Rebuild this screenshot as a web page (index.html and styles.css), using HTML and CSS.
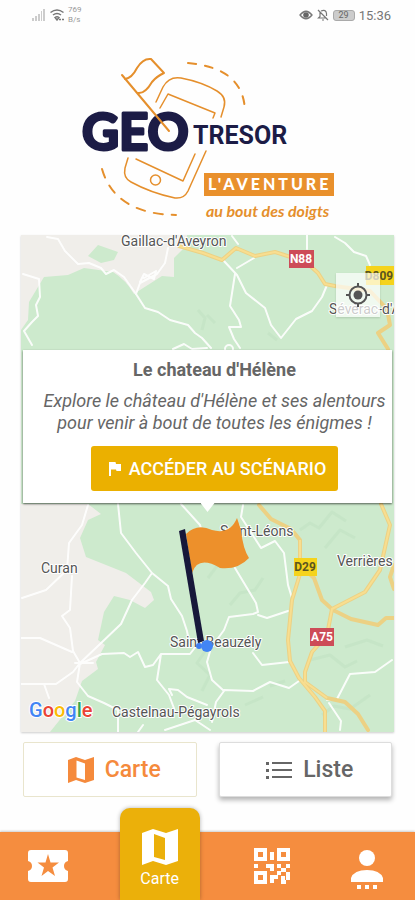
FILE: index.html
```html
<!DOCTYPE html>
<html lang="fr">
<head>
<meta charset="utf-8">
<meta name="viewport" content="width=device-width, initial-scale=1">
<title>Geotresor</title>
<link rel="stylesheet" href="styles.css">
</head>
<body>
<div class="status">
  <div class="status-group">
    <svg width="14" height="12" viewBox="0 0 14 12" fill="#ccc" aria-hidden="true"><path d="M0 12V9h2v3zM3 12V7h2v5zM6 12V5h2v7zM9 12V2h1v10zM11 12V0h2v12z"/></svg>
    <svg width="14" height="12" viewBox="0 0 14 12" fill="none" stroke="#777" stroke-width="1.5" aria-hidden="true"><path d="M0.500 3.500Q7-1.500 13.500 3.500M3 6q4-3 8 0M5 8.500q2-1.500 4 0L7 11z"/><path d="M9 10.500h5" stroke-dasharray="2 1"/></svg>
    <span class="speed">769<br>B/s</span>
  </div>
  <div class="status-group">
    <svg width="14" height="10" viewBox="0 0 14 10" aria-hidden="true"><path d="M1 5q6-7.500 12 0q-6 7.500-12 0z" fill="none" stroke="#777" stroke-width="1.300"/><circle cx="7" cy="5" r="2.800" fill="#666"/></svg>
    <svg width="12" height="12" viewBox="0 0 12 12" fill="none" stroke="#777" stroke-width="1.200" aria-hidden="true"><path d="M1 1l10 10M3 3.500v4L1.500 9H9M4 2q5-2 5.500 2.500V7M5 11h2"/></svg>
    <span class="battery">29</span>
    <span class="clock">15:36</span>
  </div>
</div>

<header class="brand">
  <svg class="logo" viewBox="70 50 275 180" role="img" aria-label="Geotresor, l'aventure au bout des doigts">
    <g fill="none" stroke="#e58f2c" stroke-linecap="round" stroke-linejoin="round">
      <g stroke-width="2">
        <path d="M188 63q57 5 57 50" stroke-dasharray="8 9"/>
        <path d="M102 169q13 45 74 46" stroke-dasharray="9 9"/>
      </g>
      <g stroke-width="1.500">
        <path d="M156 102L163 87Q169 76 181 78Q202 82 217 91Q227 97 224 107L221 117"/>
        <path d="M160 108L168 94L215 113L213 118"/>
        <path d="M128 158L125 168Q123 178 131 182Q151 193 175 198Q184 199 188 191L206 151"/>
        <path d="M136 159L183 181L195 154"/>
        <circle cx="155.500" cy="180" r="5"/>
      </g>
    </g>
    <text class="logo-geo" x="82" y="150">GEO</text>
    <text class="logo-tresor" x="193" y="144">TRESOR</text>
    <path d="M122 75L169 131M125 79Q132 78 137 68Q143 58 151 59L164 73Q157 76 152 82Q145 94 138 93" fill="none" stroke="#e58f2c" stroke-width="2" stroke-linecap="round" stroke-linejoin="round"/>
    <path d="M204 173H334V196H204z" fill="#e9902c"/>
    <text class="logo-adventure" x="208" y="190">L'AVENTURE</text>
    <text class="logo-tagline" x="206" y="217">au bout des doigts</text>
  </svg>
</header>

<main class="content">
  <section class="map" aria-label="Carte">
    <svg class="map-drawing" viewBox="21 235 373 497" preserveAspectRatio="xMidYMid slice">
      <path d="M21 235H394V732H21z" fill="#cdeacd"/>
      <g fill="#f0eeea">
        <path d="M21 235H187V245L174 258V277L162 276L140 290L134 294Q126 280 113 272L84 268L68 275L44 277L35 292L29 302L28 320L21 330z"/>
        <path d="M21 504H88L101 514L88 520L80 538L86 557L126 573L151 592L154 600L145 608L130 600L114 596L104 612L98 640L105 645L96 662L98 669L82 681L75 701L50 732H21z"/>
      </g>
      <path d="M88 256L98 245L118 252L114 260L101 263z" fill="#cdeacd"/>
      <g fill="none" stroke="#bcdfbd" stroke-width="3" opacity=".4" stroke-linejoin="round">
        <path d="M198 310l7 8l-3 12M207 315l8 8M268 333l9 7M300 530l10-7l9 5l13-16l14 9M325 548l15-18l15 8M230 605l10-12l15-3l8-12M194 640l12 10l-9 13l13 12l-8 16M207 548l10 18l-9 12M310 660l20-5l15 12l12-6M322 715l12-9l16 3l20-14M345 647l22-7l16 6M270 686l15-5M245 705l18-8"/>
      </g>
      <g fill="none" stroke="#fff" stroke-width="2" stroke-linejoin="round" stroke-linecap="round" opacity=".9">
        <path d="M47 237L58 239L65 251L78 264L89 263L101 268L106 274L114 270L124 277L136 294L145 308L158 312L170 320L188 325L195 333L202 338L211 348"/>
        <path d="M23 274L39 279L40 297L36 305L38 316L32 322L24 331L32 345M168 248L165 263L157 274L140 283L136 294M140 282l4-8l10 5l2-8l-12 7"/>
        <path d="M173 349L184 344L192 349L207 348M223 260L237 275L246 293L265 308L271 325L281 338L296 319L312 311L322 297L327 285M237 268L254 258M235 274L230 306L239 320L241 327H229L234 339L240 348M232 236L238 244M307 235V249M335 237L345 243L354 252L366 256L370 265"/>
        <path d="M88 505L82 525L69 543L67 570L46 590L22 598M72 576L70 610L62 616L70 628L73 651L80 663L77 682L88 696L104 703L118 710V732M21 638H40L72 652M21 684L56 684L73 672L80 663L99 645L121 624L132 600L145 583L152 573M118 504L121 533L136 553L152 573L168 586L171 599L182 616L187 631L190 646M80 664L102 654L124 653L130 657L138 652L145 667L153 665L161 654L190 654L197 645M161 654L157 680L169 695L175 711M181 504L200 525L206 545M75 663h18M44 684l5 14M172 695l-3-6l9 1l9 7l20 8"/>
        <path d="M243 505L241 517L261 548L275 541L284 553L288 585L292 598M235 568L256 603L258 612L253 614L229 617L224 630L211 648L207 662L212 680L224 691L216 702L212 722M258 615L267 618L288 611M253 653L262 665L289 662M224 690L253 691L270 682L289 688L299 681M392 660L375 672L350 674L337 699L327 700M329 703L341 721L340 730M143 725l-5 7M165 730l30-10l15 10"/>
        <circle cx="229" cy="349" r="4"/>
      </g>
      <g fill="none" stroke="#ecd184" stroke-width="4" stroke-linejoin="round" stroke-linecap="round">
        <path d="M179 246L203 253L222 260L236 248L255 256L275 252L306 262L318 273L325 284L335 286L370 291L387 309L390 325L378 333L388 349"/>
        <path d="M259 505L271 519L291 529L300 540V574L292 600L288 640L290 661L299 678L315 697L325 711L325 732M381 504L390 525L380 570L365 592L332 609L327 635L312 652L305 672V682L327 698L345 702L358 714L368 730M300 565L314 578L322 600L333 610L351 619L378 625L386 618H394M394 565L390 577L394 589"/>
      </g>
      <g fill="none" stroke="#f8de90" stroke-width="2" stroke-linejoin="round"><path d="M179 246L203 253L222 260L236 248L255 256L275 252L306 262L318 273L325 284L335 286M381 504L390 525L380 570L365 592L332 609L327 635L312 652L305 672V682L327 698M300 540V574L292 600L288 640L290 661L299 678L315 697L325 711V732"/></g>
      <path d="M366 266H394V285H366zM294 558H317V576H294z" fill="#f5d31c"/>
      <path d="M289 250H314V268H289zM310 628H334V646H310z" fill="#cd4c58"/>
      <g class="road-label"><text x="301" y="263" class="road-red">N88</text><text x="322" y="641" class="road-red">A75</text><text x="305" y="571">D29</text><text x="379" y="280">D809</text></g>
      <g class="place-label">
        <text x="121" y="246">Gaillac-d'Aveyron</text>
        <text x="329" y="314">Sévérac-d'A</text>
        <text x="41" y="573">Curan</text>
        <text x="220" y="536">Saint-Léons</text>
        <text x="337" y="566">Verrières</text>
        <text x="170" y="647">Saint-Beauzély</text>
        <text x="112" y="717">Castelnau-Pégayrols</text>
      </g>
      <circle cx="199" cy="646" r="3" fill="#3e7df0"/>
      <path d="M186 534Q197 523 212 530Q230 535 237 518L241 530Q243 549 249 558Q238 570 220 568Q198 555 192 573z" fill="#ed902b"/>
      <path d="M179 531L185 529L204 641L198 643z" fill="#17183a"/>
      <circle cx="207" cy="646" r="6" fill="#4285f4"/>
      <text class="google" x="29" y="717"><tspan fill="#4285f4">G</tspan><tspan fill="#ea4335">o</tspan><tspan fill="#fbbc05">o</tspan><tspan fill="#4285f4">g</tspan><tspan fill="#34a853">l</tspan><tspan fill="#ea4335">e</tspan></text>
    </svg>
    <button class="locate" type="button" aria-label="Ma position">
      <svg width="26" height="26" viewBox="0 0 26 26" fill="none" stroke="#555" stroke-width="2" aria-hidden="true"><circle cx="13" cy="13" r="8.500"/><circle cx="13" cy="13" r="4.500" fill="#555" stroke="none"/><path d="M13 1v4M13 21v4M1 13h4M21 13h4"/></svg>
    </button>
    <article class="popup">
      <h1 class="popup-title">Le chateau d'Hélène</h1>
      <p class="popup-text"><span class="popup-line">Explore le château d'Hélène et ses alentours</span><span class="popup-line">pour venir à bout de toutes les énigmes !</span></p>
      <button class="popup-action" type="button">
        <svg width="12" height="14" viewBox="0 0 12 14" fill="#fff" aria-hidden="true"><path d="M0 0h6.500l.5 2h5v7H7.500L7 7.500H2V14H0z"/></svg>
        ACCÉDER AU SCÉNARIO
      </button>
    </article>
  </section>

  <div class="switch">
    <button class="switch-button switch-active" type="button">
      <svg width="28" height="28" viewBox="0 0 28 28" fill="currentColor" fill-rule="evenodd" aria-hidden="true"><path d="M1 4L9 1L18 4L27 1V24L18 27L9 24L1 27zM9.500 4.500V21.500L18 24V7.500z"/></svg>
      Carte
    </button>
    <button class="switch-button" type="button">
      <svg width="28" height="18" viewBox="0 0 28 18" fill="currentColor" aria-hidden="true"><path d="M1 1h3v3H1zM1 8h3v3H1zM1 15h3v3H1zM7 1h20v2H7zM7 8h20v2H7zM7 15h20v2H7z"/></svg>
      Liste
    </button>
  </div>
</main>

<nav class="tabs">
  <a class="tab" href="#jeux" aria-label="Jeux">
    <svg width="40" height="32" viewBox="0 0 40 32" fill="#fff" fill-rule="evenodd" aria-hidden="true"><path d="M3 0H37Q40 0 40 3V11Q36 12 36 16T40 21V29Q40 32 37 32H3Q0 32 0 29V21Q4 20 4 16T0 11V3Q0 0 3 0zM20 4L17.500 12.500H9.500L16 17.500L13.500 26L20 21L27 26L24.500 17.500L31 12.500H22.500z"/></svg>
  </a>
  <a class="tab tab-current" href="#carte" aria-current="page">
    <svg width="36" height="36" viewBox="0 0 36 36" fill="#fff" fill-rule="evenodd" aria-hidden="true"><path d="M0 4L11 0L24 4L36 0V32L24 36L11 32L0 36zM12 5V28L23 31V9z"/></svg>
    <span>Carte</span>
  </a>
  <a class="tab" href="#scanner" aria-label="Scanner un QR code">
    <svg width="36" height="36" viewBox="0 0 36 36" fill="#fff" fill-rule="evenodd" aria-hidden="true"><path d="M0 0H13V13H0zM4 4V9H9V4zM23 0H36V13H23zM27 4V9H32V4zM0 23H13V36H0zM4 27V32H9V27zM16 4h4v8h-4zM0 16h4v4H0zM12 16h8v7h-4v-3h-4zM23 16h4v4h-4zM32 16h4v4h-4zM27 20h5v4h-5zM16 27h7v-4h4v4h-3v4h-4v4h-4zM32 24h4v8h-4v4h-5v-4h5zM27 28h4v4h-4z"/></svg>
  </a>
  <a class="tab tab-profile" href="#profil" aria-label="Profil">
    <svg width="32" height="40" viewBox="0 0 32 40" fill="#fff" aria-hidden="true"><circle cx="16" cy="8" r="8"/><path d="M0 32V28Q3 20 16 20T32 28V32zM6 35h4v4H6zM14 35h4v4h-4zM22 35h4v4h-4z"/></svg>
  </a>
</nav>
</body>
</html>
```

FILE: styles.css
```css
* {
  box-sizing: border-box;
}

body {
  margin: 0;
  min-height: 100vh;
  display: flex;
  flex-direction: column;
  background: #fefefe;
  color: #666;
  font-family: Roboto, "Liberation Sans", sans-serif;
}

button {
  font-family: inherit;
  cursor: pointer;
}

.status {
  height: 30px;
  display: flex;
  align-items: center;
  justify-content: space-between;
  padding: 0 24px 0 32px;
}

.status-group {
  display: flex;
  align-items: center;
  gap: 4px;
}

.speed {
  font-size: 8px;
  line-height: 10px;
  color: #999;
}

.battery {
  padding: 0 5px;
  border: 1px solid #aaa;
  border-radius: 3px;
  background: #ccc;
  font-size: 9px;
  line-height: 9px;
}

.clock {
  font-size: 13px;
  color: #777;
}

.brand {
  padding: 20px 70px 5px;
}

.logo {
  display: block;
  width: 100%;
  max-width: 400px;
  margin: 0 auto;
}

.logo-geo {
  font: 700 51px Lato, sans-serif;
  fill: #1c1c46;
  stroke: #1c1c46;
  stroke-width: 3px;
  stroke-linejoin: round;
}

.logo-tresor {
  font: 700 25px Roboto, sans-serif;
  fill: #1c1c46;
}

.logo-adventure {
  font: 900 16px Lato, sans-serif;
  letter-spacing: 3px;
  fill: #fff;
}

.logo-tagline {
  font: italic 700 16px Lato, sans-serif;
  fill: #e58f2c;
}

.content {
  flex: 1;
  display: flex;
  flex-direction: column;
  padding: 0 21px;
}

.map {
  position: relative;
  flex: 1;
  min-height: 440px;
  box-shadow: 0 1px 2px rgba(0, 0, 0, 0.2);
  overflow: hidden;
}

.map-drawing {
  position: absolute;
  inset: 0;
  width: 100%;
  height: 100%;
}

.place-label {
  font: 400 14px Roboto, sans-serif;
  fill: #555;
  stroke: #fff;
  stroke-width: 2px;
  stroke-linejoin: round;
  paint-order: stroke;
}

.road-label {
  font: 700 12px Roboto, sans-serif;
  text-anchor: middle;
  fill: #5b5520;
}

.road-red {
  fill: #fff;
}

.google {
  font: 500 20px Roboto, sans-serif;
  stroke: #fff;
  stroke-width: 2px;
  paint-order: stroke;
}

.locate {
  position: absolute;
  top: 38px;
  right: 14px;
  width: 44px;
  height: 44px;
  display: grid;
  place-items: center;
  padding: 0;
  border: 0;
  background: rgba(255, 255, 255, 0.7);
  box-shadow: 0 1px 2px rgba(0, 0, 0, 0.15);
}

.popup {
  position: absolute;
  top: 115px;
  left: 2px;
  right: 2px;
  display: flex;
  flex-direction: column;
  align-items: center;
  padding: 9px 5px 12px 19px;
  background: #fff;
  box-shadow: 0 1px 2px rgba(0, 0, 0, 0.6);
}

.popup::after {
  content: "";
  position: absolute;
  top: 100%;
  left: 50%;
  width: 14px;
  height: 9px;
  margin-left: -7px;
  background: #fff;
  clip-path: polygon(0 0, 100% 0, 50% 100%);
}

.popup-title {
  margin: 0;
  font-size: 18px;
  line-height: 22px;
  font-weight: 700;
}

.popup-text {
  align-self: stretch;
  margin: 9px 0 12px;
  overflow: hidden;
  font-size: 18px;
  line-height: 22px;
  font-style: italic;
  text-align: center;
}

.popup-line {
  display: block;
  white-space: nowrap;
}

.popup-action {
  display: flex;
  align-items: center;
  gap: 8px;
  height: 45px;
  padding: 0 12px 0 18px;
  border: 0;
  border-radius: 3px;
  background: #ebb000;
  color: #fff;
  font-size: 18px;
  font-weight: 500;
  white-space: nowrap;
}

.switch {
  display: flex;
  gap: 22px;
  padding: 10px 2px 35px;
}

.switch-button {
  flex: 1;
  height: 55px;
  display: flex;
  align-items: center;
  justify-content: center;
  gap: 10px;
  padding: 0 0 0 8px;
  border: 1px solid #ddd;
  border-radius: 2px;
  background: #fff;
  box-shadow: 0 3px 5px rgba(0, 0, 0, 0.3);
  color: #666;
  font-size: 23px;
  font-weight: 500;
}

.switch-active {
  border-color: #e9e5cd;
  box-shadow: none;
  color: #f58a3c;
}

.tabs {
  display: grid;
  grid-template-columns: 1fr auto 1fr 1fr;
  background: #f58d3f;
  box-shadow: 0 -1px 2px rgba(0, 0, 0, 0.2);
}

.tab {
  display: flex;
  flex-direction: column;
  align-items: center;
  justify-content: center;
  height: 68px;
  color: #fff;
  text-decoration: none;
}

.tab-profile {
  padding-top: 8px;
}

.tab-current {
  width: 80px;
  height: 92px;
  margin: -24px 24px 0;
  padding-top: 10px;
  gap: 4px;
  border-radius: 10px 10px 0 0;
  background: #ebb00a;
  box-shadow: 0 0 4px rgba(0, 0, 0, 0.3);
  font-size: 16px;
  line-height: 20px;
}
```
